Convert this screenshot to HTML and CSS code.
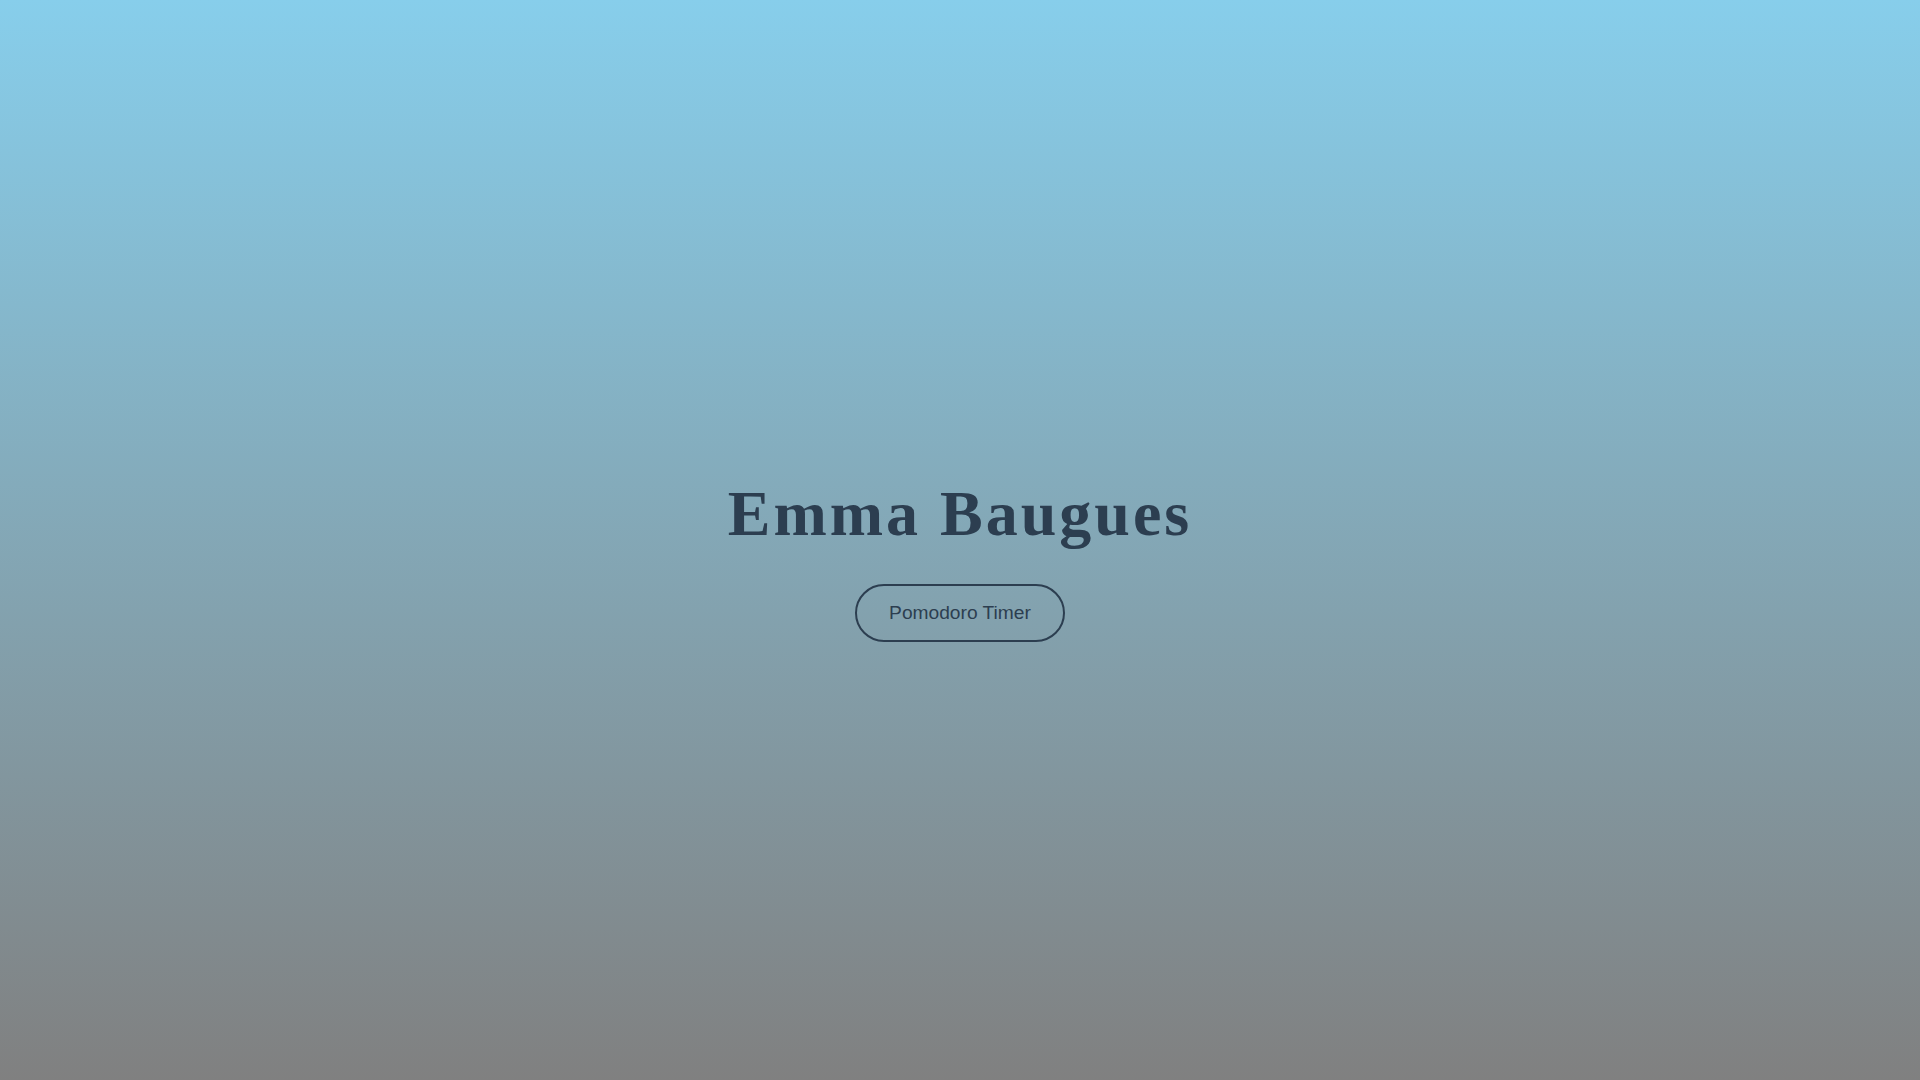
FILE: index.html
```html
<!DOCTYPE html>
<html lang="en">
<head>
<meta charset="utf-8">
<title>Emma Baugues</title>
<link rel="stylesheet" href="styles.css">
</head>
<body>
<main class="hero">
  <h1 class="hero-title">Emma Baugues</h1>
  <a class="hero-button" href="#">Pomodoro Timer</a>
</main>
</body>
</html>
```

FILE: styles.css
```css
html, body {
  margin: 0;
  padding: 0;
  height: 100%;
}

body {
  background: linear-gradient(to bottom, #87ceeb 0%, #808080 100%);
  font-family: "Liberation Sans", Arial, sans-serif;
  color: #2c3e50;
}

.hero {
  min-height: 100vh;
  display: flex;
  flex-direction: column;
  align-items: center;
  justify-content: center;
}

.hero-title {
  font-family: "Liberation Serif", "Times New Roman", serif;
  font-weight: bold;
  font-size: 64px;
  letter-spacing: 3px;
  margin: 39px 0 33px;
  color: #2c3e50;
}

.hero-button {
  display: inline-block;
  padding: 16px 32px;
  border: 2px solid #2c3e50;
  border-radius: 30px;
  font-size: 19.2px;
  color: #2c3e50;
  text-decoration: none;
  background: transparent;
}
```
